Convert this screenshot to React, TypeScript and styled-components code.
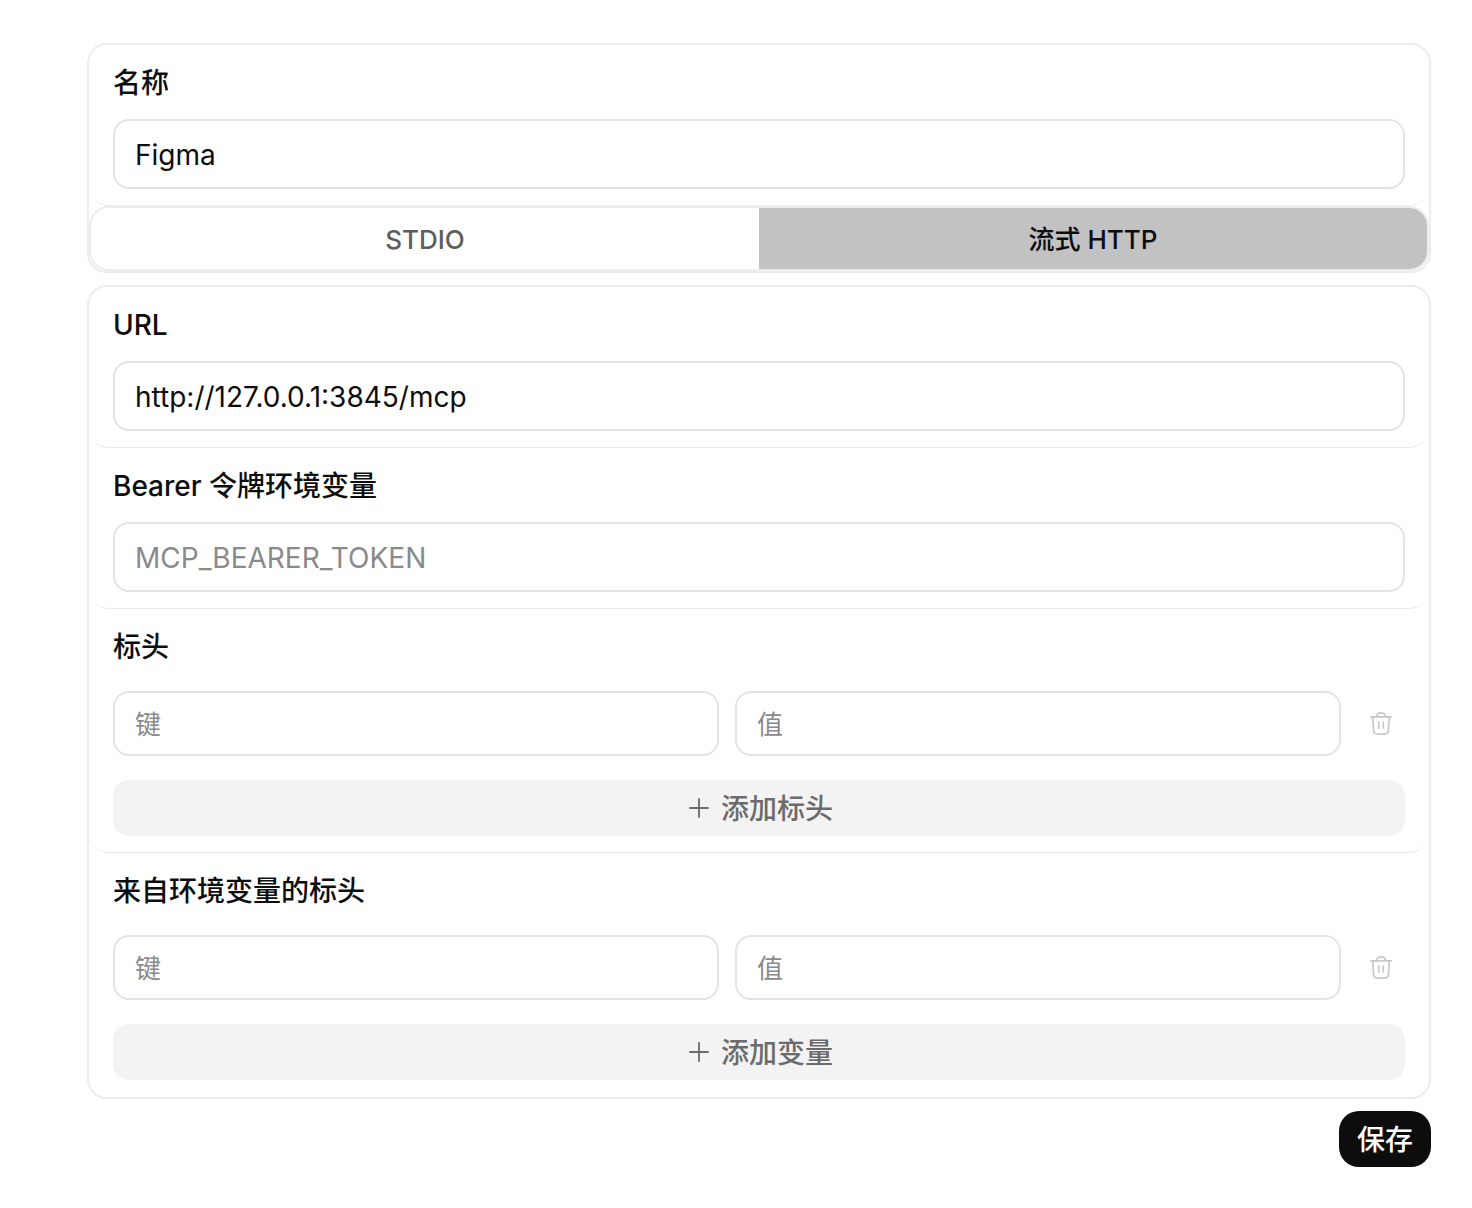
import React, { useId, useState } from 'react';
import styled, { createGlobalStyle } from 'styled-components';

const GlobalStyle = createGlobalStyle`
  *, *::before, *::after { box-sizing: border-box; }
  body {
    margin: 0;
    background: #ffffff;
    color: #0d0d0d;
    font-family: Inter, "Noto Sans CJK SC", sans-serif;
    font-size: 28px;
    line-height: 44px;
    -webkit-font-smoothing: antialiased;
  }
  button, input { font: inherit; color: inherit; margin: 0; }
`;

const Form = styled.form`
  display: flex;
  flex-direction: column;
  gap: 12px;
  padding: 43px 41px 41px 87px;
`;

const Card = styled.div`
  border: 2px solid #ededed;
  border-radius: 20px;
`;

const Section = styled.section`
  display: flex;
  flex-direction: column;
  gap: 14px;
  padding: 16px 24px;
  border-bottom: 1px solid #ededed;
  border-radius: 20px;
  &:last-child { border-bottom-color: transparent; }
`;

const Label = styled.label`
  font-weight: 500;
`;

const Heading = styled.h2`
  margin: 0;
  font: inherit;
  font-weight: 500;
`;

const TextInput = styled.input<{ $compact?: boolean }>`
  width: 100%;
  min-width: 0;
  height: ${(p) => (p.$compact ? 65 : 70)}px;
  padding: 2px 20px 0;
  border: 2px solid #e4e4e4;
  border-radius: 16px;
  background: #ffffff;
  font-size: ${(p) => (p.$compact ? 26 : 28)}px;
  outline: none;
  &::placeholder { color: #8a8a8a; opacity: 1; }
  &:focus-visible { border-color: #b4b4b4; }
`;

const Segmented = styled.div`
  display: grid;
  grid-template-columns: 1fr 1fr;
  border: 2px solid #ededed;
  border-radius: 20px;
  overflow: hidden;
`;

const Segment = styled.button<{ $active: boolean }>`
  height: 61px;
  padding: 2px 0 0;
  border: 0;
  background: ${(p) => (p.$active ? '#c2c2c2' : 'transparent')};
  color: ${(p) => (p.$active ? '#0d0d0d' : '#5d5d5d')};
  font-size: 26px;
  font-weight: 500;
  cursor: pointer;
`;

const PairList = styled.div`
  display: flex;
  flex-direction: column;
  gap: 24px;
  padding-top: 8px;
`;

const PairRow = styled.div`
  display: grid;
  grid-template-columns: 1fr 1fr 48px;
  gap: 16px;
  align-items: center;
`;

const IconButton = styled.button`
  display: grid;
  place-items: center;
  height: 48px;
  padding: 0;
  border: 0;
  background: none;
  color: #c8c8c8;
`;

const AddButton = styled.button`
  display: flex;
  align-items: center;
  justify-content: center;
  gap: 12px;
  height: 56px;
  padding: 2px 0 0;
  border: 0;
  border-radius: 16px;
  background: #f3f3f3;
  color: #6b6b6b;
  font-weight: 500;
  cursor: pointer;
`;

const SaveButton = styled.button`
  align-self: flex-end;
  height: 56px;
  padding: 2px 18px 0;
  border: 0;
  border-radius: 20px;
  background: #0d0d0d;
  color: #ffffff;
  font-weight: 500;
  cursor: pointer;
`;

const TrashIcon = () => (
  <svg width="24" height="26" viewBox="0 0 24 26" fill="none" stroke="currentColor" strokeWidth="1.7" strokeLinecap="round" strokeLinejoin="round" aria-hidden="true">
    <path d="M1.900 5.900h20.200" />
    <path d="M7.200 5.700C7.900 3.200 9.500 1.900 12 1.900s4.100 1.300 4.800 3.800" />
    <path d="M3.700 6.200l.9 13.300c.15 2.400 1.300 3.600 3.500 3.600h7.800c2.200 0 3.350-1.200 3.500-3.600L20.300 6.200" />
    <path d="M9.700 11v6M14.300 11v6" />
  </svg>
);

const PlusIcon = () => (
  <svg width="24" height="24" viewBox="0 0 24 24" fill="none" stroke="currentColor" strokeWidth="1.8" strokeLinecap="round" aria-hidden="true">
    <path d="M14 2v18M5 11h18" />
  </svg>
);

interface FieldProps {
  label: string;
  initial?: string;
  placeholder?: string;
}

const Field = ({ label, initial = '', placeholder }: FieldProps) => {
  const id = useId();
  const [value, setValue] = useState(initial);
  return (
    <Section>
      <Label htmlFor={id}>{label}</Label>
      <TextInput id={id} value={value} placeholder={placeholder} onChange={(e) => setValue(e.target.value)} />
    </Section>
  );
};

const PairSection = ({ title, addLabel }: { title: string; addLabel: string }) => {
  const [rows, setRows] = useState([0]);
  return (
    <Section>
      <Heading>{title}</Heading>
      <PairList>
        {rows.map((row) => (
          <PairRow key={row}>
            <TextInput $compact placeholder="键" aria-label="键" />
            <TextInput $compact placeholder="值" aria-label="值" />
            <IconButton
              type="button"
              aria-label="删除"
              disabled={rows.length === 1}
              onClick={() => setRows(rows.filter((r) => r !== row))}
            >
              <TrashIcon />
            </IconButton>
          </PairRow>
        ))}
        <AddButton type="button" onClick={() => setRows([...rows, Math.max(...rows) + 1])}>
          <PlusIcon />
          {addLabel}
        </AddButton>
      </PairList>
    </Section>
  );
};

export default function App() {
  const [transport, setTransport] = useState('http');
  return (
    <>
      <GlobalStyle />
      <Form onSubmit={(e) => e.preventDefault()}>
        <Card>
          <Field label="名称" initial="Figma" />
          <Segmented>
            <Segment type="button" $active={transport === 'stdio'} aria-pressed={transport === 'stdio'} onClick={() => setTransport('stdio')}>
              STDIO
            </Segment>
            <Segment type="button" $active={transport === 'http'} aria-pressed={transport === 'http'} onClick={() => setTransport('http')}>
              流式 HTTP
            </Segment>
          </Segmented>
        </Card>
        <Card>
          <Field label="URL" initial="http://127.0.0.1:3845/mcp" />
          <Field label="Bearer 令牌环境变量" placeholder="MCP_BEARER_TOKEN" />
          <PairSection title="标头" addLabel="添加标头" />
          <PairSection title="来自环境变量的标头" addLabel="添加变量" />
        </Card>
        <SaveButton type="submit">保存</SaveButton>
      </Form>
    </>
  );
}
